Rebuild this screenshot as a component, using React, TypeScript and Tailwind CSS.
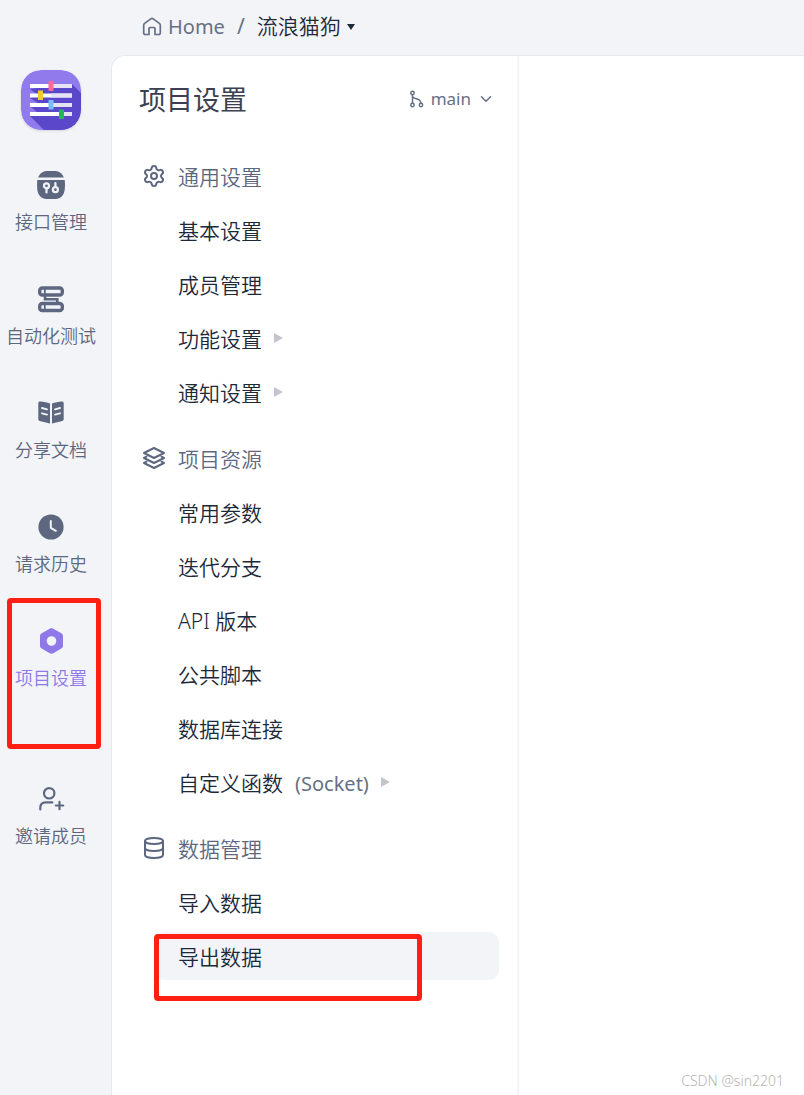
import React, { useState } from 'react';
import { Settings, Database, ChevronDown } from 'lucide-react';

interface IconProps {
    className?: string;
}

interface MenuItem {
    label: string;
    note?: string;
    expandable?: boolean;
}

interface MenuSection {
    title: string;
    icon: React.ReactNode;
    items: MenuItem[];
}

const LogoIcon: React.FC<IconProps> = ({ className }) => (
    <svg viewBox="0 0 60 60" className={className} aria-hidden="true">
        <defs>
            <clipPath id="logo-shape">
                <rect width="60" height="60" rx="20" />
            </clipPath>
        </defs>
        <g clipPath="url(#logo-shape)">
            <rect width="60" height="60" fill="#917bec" />
            <path d="M51 14l14 14v37H28L9 46l8-3-8-7 8-3-8-5 8-3-8-6z" fill="#5b47c9" />
        </g>
        <g fill="#fff">
            <rect x="9" y="14" width="42" height="4" />
            <rect x="9" y="23.500" width="42" height="4" />
            <rect x="9" y="33" width="42" height="4" />
            <rect x="9" y="42" width="42" height="4" />
        </g>
        <g fill="#e4e2f4">
            <rect x="32" y="14" width="19" height="4" />
            <rect x="30" y="23.500" width="21" height="4" />
            <rect x="33" y="33" width="18" height="4" />
            <rect x="43" y="42" width="8" height="4" />
        </g>
        <rect x="27.500" y="11" width="5" height="10" fill="#fb6a98" />
        <rect x="17" y="20.500" width="5" height="9.500" fill="#f5c92f" />
        <rect x="27.500" y="30" width="5" height="9.500" fill="#77bdfb" />
        <rect x="38" y="39.500" width="5" height="9.500" fill="#25b756" />
    </svg>
);

const ApiIcon: React.FC<IconProps> = ({ className }) => (
    <svg viewBox="0 0 28 28" className={className} aria-hidden="true">
        <path d="M1.200 6.500C3 1.500 6.500 0 11 0h6c4.500 0 8 1.500 9.800 6.500z" fill="currentColor" />
        <path d="M.3 9h27.400c.4 3 .4 7-.1 10.500C26.500 25.500 23 28 17 28h-6C5 28 1.500 25.500.4 19.500 0 16 0 12 .3 9z" fill="currentColor" />
        <g fill="none" stroke="#f2f4f8" strokeWidth="2.200" strokeLinecap="round">
            <circle cx="9.500" cy="14.800" r="2.500" />
            <path d="M9.500 17.500v4" />
            <circle cx="18.400" cy="18.700" r="2.500" />
            <path d="M18.400 16v-4" />
        </g>
    </svg>
);

const TestIcon: React.FC<IconProps> = ({ className }) => (
    <svg viewBox="0 0 28 28" className={className} fill="none" stroke="currentColor" aria-hidden="true">
        <rect x="2.700" y="3" width="22.600" height="7" rx="2.600" strokeWidth="3.400" />
        <rect x="2.700" y="18.500" width="22.600" height="7" rx="2.600" strokeWidth="3.400" />
        <path d="M7.800 4v5M7.800 19.500v5" strokeWidth="1.800" />
        <path d="M8 11v3.200h12.300V18" strokeWidth="2.600" />
    </svg>
);

const BookIcon: React.FC<IconProps> = ({ className }) => (
    <svg viewBox="0 0 28 28" className={className} aria-hidden="true">
        <path d="M13 4.500v19.900L2.700 22c-.9-.2-1.400-.8-1.400-1.700V4.200c0-1.200.9-1.900 2.100-1.700 3.400.3 6.700.9 9.600 2z" fill="currentColor" />
        <path d="M15 4.500v19.900L25.300 22c.9-.2 1.400-.8 1.400-1.700V4.200c0-1.200-.9-1.900-2.100-1.700-3.400.3-6.700.9-9.600 2z" fill="currentColor" />
        <g stroke="#f2f4f8" strokeWidth="1.900" strokeLinecap="round">
            <path d="M5 9l5 1.300M5 14.300l5 1.300M23 9l-5 1.300M23 14.300l-5 1.300" />
        </g>
    </svg>
);

const ClockIcon: React.FC<IconProps> = ({ className }) => (
    <svg viewBox="0 0 28 28" className={className} aria-hidden="true">
        <circle cx="14" cy="14" r="12.600" fill="currentColor" />
        <path d="M13.800 8v6.800l5 3" fill="none" stroke="#f2f4f8" strokeWidth="2" strokeLinecap="round" strokeLinejoin="round" />
    </svg>
);

const HexagonIcon: React.FC<IconProps> = ({ className }) => (
    <svg viewBox="0 0 28 28" className={className} aria-hidden="true">
        <path
            d="M12.700 1.700c1-.6 2.600-.6 3.600 0l8 4.500c1 .6 1.700 1.600 1.700 2.800v9.800c0 1.200-.7 2.200-1.700 2.800l-8 4.600c-1 .6-2.600.6-3.600 0l-8-4.600c-1-.6-1.700-1.600-1.700-2.800V9c0-1.200.7-2.200 1.700-2.800zM14.500 9.200a4.800 4.800 0 1 0 0 9.600 4.800 4.800 0 0 0 0-9.600z"
            fill="currentColor"
            fillRule="evenodd"
        />
    </svg>
);

const InviteIcon: React.FC<IconProps> = ({ className }) => (
    <svg viewBox="0 0 28 28" className={className} fill="none" stroke="currentColor" strokeWidth="2.200" strokeLinecap="round" aria-hidden="true">
        <circle cx="12.200" cy="8.300" r="5.200" />
        <path d="M3.300 24.500v-1.700c0-3.400 2-5.400 5.400-5.400h6.600" />
        <path d="M22.500 16.800v7.400M18.800 20.500h7.400" />
    </svg>
);

const HomeIcon: React.FC<IconProps> = ({ className }) => (
    <svg viewBox="0 0 20 20" className={className} fill="none" stroke="currentColor" strokeWidth="1.700" strokeLinejoin="round" aria-hidden="true">
        <path d="M7 17.500v-6c0-.6.4-1 1-1h4c.6 0 1 .4 1 1v6h3.600c1.100 0 1.700-.7 1.700-1.700V8.200c0-.8-.3-1.400-.9-1.800L11.200 1.900c-.8-.6-1.600-.6-2.400 0L2.600 6.400c-.6.4-.9 1-.9 1.800v7.600c0 1 .6 1.700 1.700 1.700z" />
    </svg>
);

const BranchIcon: React.FC<IconProps> = ({ className }) => (
    <svg viewBox="0 0 16 18" className={className} fill="none" stroke="currentColor" strokeWidth="1.500" aria-hidden="true">
        <circle cx="3.500" cy="3" r="1.700" />
        <circle cx="3.500" cy="15" r="1.700" />
        <circle cx="12" cy="15" r="1.700" />
        <path d="M3.500 4.700v8.600M3.500 6.500c.8 2 4.200 2 6.500 3.300 1.400.8 2 1.700 2 3.500" />
    </svg>
);

const LayersIcon: React.FC<IconProps> = ({ className }) => (
    <svg viewBox="0 0 24 24" className={className} fill="none" stroke="currentColor" strokeWidth="2" strokeLinejoin="round" strokeLinecap="round" aria-hidden="true">
        <path d="M12 2l10 5-10 5L2 7z" />
        <path d="M4.500 10.700L2 12l10 5 10-5-2.500-1.300" />
        <path d="M4.500 15.700L2 17l10 5 10-5-2.500-1.300" />
    </svg>
);

const CaretRight: React.FC<IconProps> = ({ className }) => (
    <svg viewBox="0 0 9 10" className={className} fill="currentColor" aria-hidden="true">
        <path d="M0 0l9 5-9 5z" />
    </svg>
);

const navItems = [
    { label: '接口管理', Icon: ApiIcon },
    { label: '自动化测试', Icon: TestIcon },
    { label: '分享文档', Icon: BookIcon },
    { label: '请求历史', Icon: ClockIcon },
    { label: '项目设置', Icon: HexagonIcon, marked: true },
];

const sections: MenuSection[] = [
    {
        title: '通用设置',
        icon: <Settings className="w-6 h-6" strokeWidth={2} />,
        items: [
            { label: '基本设置' },
            { label: '成员管理' },
            { label: '功能设置', expandable: true },
            { label: '通知设置', expandable: true },
        ],
    },
    {
        title: '项目资源',
        icon: <LayersIcon className="w-6 h-6" />,
        items: [
            { label: '常用参数' },
            { label: '迭代分支' },
            { label: 'API 版本' },
            { label: '公共脚本' },
            { label: '数据库连接' },
            { label: '自定义函数', note: '(Socket)', expandable: true },
        ],
    },
    {
        title: '数据管理',
        icon: <Database className="w-6 h-6" strokeWidth={2} />,
        items: [{ label: '导入数据' }, { label: '导出数据' }],
    },
];

export default function App() {
    const [activeNav, setActiveNav] = useState('项目设置');
    const [activeItem, setActiveItem] = useState('导出数据');

    return (
        <div className="relative flex min-h-screen bg-[#f2f4f8] font-['Noto_Sans','Noto_Sans_CJK_SC',sans-serif] text-[#667085]">
            {/* Sidebar */}
            <aside className="flex w-[111px] shrink-0 flex-col items-center pt-[70px] pr-[9px]">
                <LogoIcon className="w-[60px] h-[60px] rounded-[20px] shadow-sm" />
                <nav className="mt-[41px] flex w-full flex-col gap-12">
                    {navItems.map(({ label, Icon, marked }) => (
                        <button
                            key={label}
                            onClick={() => setActiveNav(label)}
                            className={`relative flex flex-col items-center gap-2 whitespace-nowrap text-[18px] leading-[30px] font-[350] ${activeNav === label ? 'text-[#8f78e8]' : 'text-[#5d6880]'}`}
                        >
                            <Icon className="w-7 h-7" />
                            {label}
                            {marked && (
                                <span className="pointer-events-none absolute -top-[29px] left-[7px] h-[151px] w-[94px] rounded border-[5px] border-[#ff2013]" />
                            )}
                        </button>
                    ))}
                    <button className="mt-11 flex flex-col items-center gap-2 text-[18px] leading-[30px] font-[350] text-[#5d6880]">
                        <InviteIcon className="w-7 h-7" />
                        邀请成员
                    </button>
                </nav>
            </aside>

            <div className="flex min-w-0 flex-1 flex-col">
                {/* Breadcrumb */}
                <header className="flex h-[55px] items-center pb-0.5 pl-[31px] text-[21px]">
                    <a href="#home" className="flex items-center gap-[6px] text-[20px]">
                        <HomeIcon className="w-5 h-5" />
                        Home
                    </a>
                    <span className="mx-3">/</span>
                    <button className="flex items-center gap-[6px] text-[#1d2939] font-[350]">
                        流浪猫狗
                        <svg viewBox="0 0 8 6" className="w-2 h-[6px]" fill="currentColor" aria-hidden="true">
                            <path d="M0 0h8L4 6z" />
                        </svg>
                    </button>
                </header>

                <main className="flex flex-1 rounded-tl-[14px] border-t border-l border-[#e6e8ef] bg-white">
                    {/* Settings menu */}
                    <section className="w-[407px] shrink-0 border-r-2 border-[#f2f4f8] pb-12">
                        <div className="flex items-center justify-between pt-6 pr-[22px] pl-[27px]">
                            <h1 className="text-[27px] leading-10 text-[#3b4152]">项目设置</h1>
                            <button className="flex items-center gap-[6px] pb-0.5 text-[17px]">
                                <BranchIcon className="w-4 h-[18px]" />
                                main
                                <ChevronDown className="w-[18px] h-[18px]" />
                            </button>
                        </div>

                        <div className="mt-8 flex flex-col gap-[18px]">
                            {sections.map((section) => (
                                <div key={section.title} className="flex flex-col gap-[6px]">
                                    <h2 className="flex h-12 items-center gap-3 pl-[30px] text-[21px] font-[350] text-[#5d6880]">
                                        {section.icon}
                                        <span className="pt-1">{section.title}</span>
                                    </h2>
                                    {section.items.map((item) => (
                                        <div key={item.label} className="relative mr-[18px] ml-[42px]">
                                            <button
                                                onClick={() => setActiveItem(item.label)}
                                                className={`flex h-12 w-full items-center gap-3 rounded-[10px] px-6 text-left text-[21px] font-[350] text-[#1d2939] ${activeItem === item.label ? 'bg-[#f2f4f8]' : ''}`}
                                            >
                                                <span className="pt-1">{item.label}</span>
                                                {item.note && <span className="pt-1 text-[20px] font-normal text-[#667085]">{item.note}</span>}
                                                {item.expandable && <CaretRight className="w-[9px] h-[10px] text-[#c3c5cc]" />}
                                            </button>
                                            {item.label === '导出数据' && (
                                                <span className="pointer-events-none absolute top-0.5 left-0 h-[67px] w-[268px] rounded border-[5px] border-[#ff2013]" />
                                            )}
                                        </div>
                                    ))}
                                </div>
                            ))}
                        </div>
                    </section>
                </main>
            </div>

            <span className="absolute right-5 bottom-1 text-[14px] text-[#b5b5b5] font-light">CSDN @sin2201</span>
        </div>
    );
}
